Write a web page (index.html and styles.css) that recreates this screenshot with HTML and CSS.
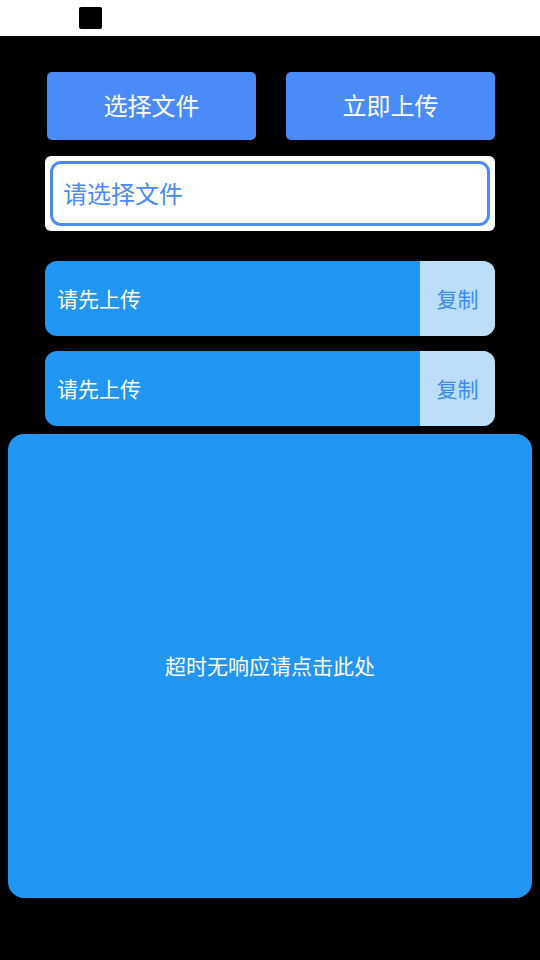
FILE: index.html
```html
<!DOCTYPE html>
<html>
<head>
    <meta charset="utf-8">
    <link rel="stylesheet" href="styles.css">
</head>
<body>
    <div class="status-bar">
        <span class="status-dot"></span>
    </div>

    <div class="page">
        <!-- top actions -->
        <div class="actions">
            <button type="button" class="action-button">选择文件</button>
            <button type="button" class="action-button">立即上传</button>
        </div>

        <div class="file-box">
            <div class="file-input">请选择文件</div>
        </div>

        <!-- result links -->
        <div class="link-row">
            <span class="link-text">请先上传</span>
            <button type="button" class="copy-button">复制</button>
        </div>
        <div class="link-row">
            <span class="link-text">请先上传</span>
            <button type="button" class="copy-button">复制</button>
        </div>

        <div class="timeout-panel">超时无响应请点击此处</div>
    </div>
</body>
</html>
```

FILE: styles.css
```css
body {
    margin: 0;
    background: #000;
    font-family: "Noto Sans CJK SC", "Noto Sans", sans-serif;
    width: 540px;
    height: 960px;
    overflow: hidden;
}

.status-bar {
    height: 36px;
    background: #fff;
    display: flex;
    align-items: flex-start;
}

.status-dot {
    display: block;
    width: 23px;
    height: 22px;
    margin: 7px 0 0 79px;
    background: #000;
    border-radius: 2px;
}

.page {
    display: flex;
    flex-direction: column;
    padding: 36px 8px 0;
}

.actions {
    display: flex;
    gap: 30px;
    margin: 0 37px 0 39px;
}

.action-button {
    flex: 1;
    height: 68px;
    border: none;
    border-radius: 5px;
    background: #4b8bf9;
    color: #fff;
    font-family: inherit;
    font-size: 24px;
    padding: 0 0 3px;
    cursor: pointer;
}

.file-box {
    margin: 16px 37px 0;
    height: 75px;
    background: #fff;
    border-radius: 6px;
    padding: 5px;
    box-sizing: border-box;
}

.file-input {
    height: 100%;
    box-sizing: border-box;
    border: 3px solid #4b8bf9;
    border-radius: 11px;
    display: flex;
    align-items: center;
    padding: 0 0 3px 10px;
    color: #4b8bf9;
    font-size: 24px;
}

.link-row {
    display: flex;
    height: 75px;
    margin: 30px 37px 0;
    background: #2196f3;
    border-radius: 12px;
    overflow: hidden;
}

.link-row + .link-row {
    margin-top: 15px;
}

.link-text {
    flex: 1;
    display: flex;
    align-items: center;
    padding: 0 0 2px 12px;
    color: #fff;
    font-size: 21px;
}

.copy-button {
    width: 75px;
    border: none;
    background: #bbdefb;
    color: #3a8cf2;
    font-family: inherit;
    font-size: 21px;
    padding: 0 0 2px;
    cursor: pointer;
}

.timeout-panel {
    margin-top: 8px;
    height: 464px;
    padding-bottom: 2px;
    box-sizing: border-box;
    background: #2196f3;
    border-radius: 16px;
    display: flex;
    align-items: center;
    justify-content: center;
    color: #fff;
    font-size: 21px;
}
```
